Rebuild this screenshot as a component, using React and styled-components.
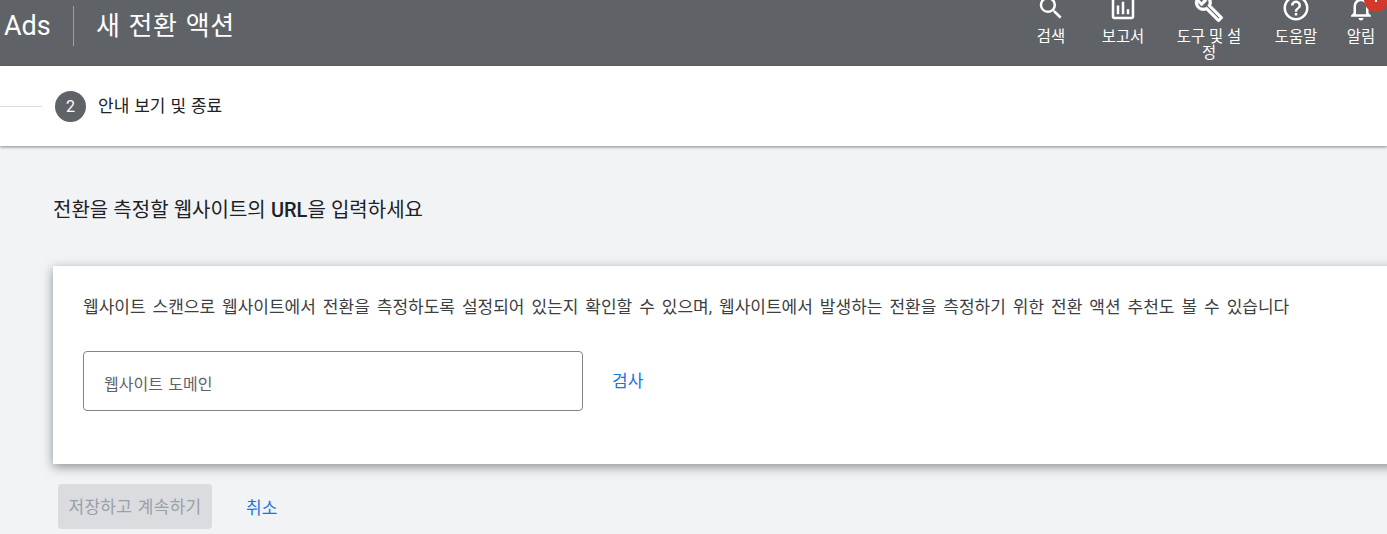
import React from "react";
import styled, { createGlobalStyle } from "styled-components";
import { MdSearch, MdOutlineAssessment, MdHelpOutline, MdNotificationsNone } from "react-icons/md";

const Global = createGlobalStyle`
  html, body { margin: 0; padding: 0; background: #f1f3f5; overflow: hidden; }
  body { font-family: Roboto, "Noto Sans CJK KR", sans-serif; }
`;

const Page = styled.div`
  width: 1387px;
  height: 534px;
  overflow: hidden;
  background: #f1f3f5;
`;

const Header = styled.header`
  height: 66px;
  background: #5f6368;
  display: flex;
  color: #fff;
  overflow: hidden;
`;

const Brand = styled.div`
  font-size: 27px;
  line-height: 52px;
  padding-left: 4px;
  width: 69px;
`;

const Divider = styled.div`
  width: 1px;
  height: 40px;
  margin-top: 6px;
  background: #9aa0a6;
`;

const Title = styled.h1`
  margin: 0 0 0 22px;
  font-size: 26px;
  font-weight: 400;
  line-height: 52px;
  flex: 1;
  letter-spacing: 0.6px;
  word-spacing: 1px;
`;

const Nav = styled.nav`
  display: flex;
`;

const NavItem = styled.div`
  width: ${(p) => p.$w}px;
  box-sizing: border-box;
  padding: 0 ${(p) => p.$pad || 0}px;
  margin-top: -7px;
  display: flex;
  flex-direction: column;
  align-items: center;
  position: relative;
  font-size: 15.4px;
  line-height: 16px;
  text-align: center;
  svg { flex: none; display: block; }
`;

const NavLabel = styled.span`
  margin-top: 6px;
`;

const WrenchSvg = styled.svg`
  width: 30px;
  height: 30px;
  fill: currentColor;
  stroke: currentColor;
  stroke-width: 0.6;
`;

const Wrench = () => (
  <WrenchSvg viewBox="0 0 24 24">
    <path d="M22.61 18.99l-9.08-9.08c.93-2.34.45-5.1-1.44-7C9.79.61 6.21.4 3.66 2.26L7.5 6.11 6.08 7.52 2.25 3.69C.39 6.23.6 9.82 2.9 12.11c1.86 1.86 4.57 2.35 6.89 1.48l9.11 9.11c.39.39 1.02.39 1.41 0l2.3-2.3c.4-.38.4-1.01 0-1.41zm-3 1.6l-9.46-9.46c-.61.45-1.29.72-2 .82-1.36.2-2.79-.21-3.83-1.25C3.37 9.76 2.93 8.5 3 7.26l3.09 3.09 4.24-4.24-3.09-3.09c1.24-.07 2.49.37 3.44 1.31 1.08 1.08 1.49 2.57 1.24 3.96-.12.71-.42 1.37-.88 1.96l9.45 9.45-.88.89z" />
  </WrenchSvg>
);

const Badge = styled.span`
  position: absolute;
  left: 29px;
  top: -5px;
  width: 24px;
  height: 24px;
  border-radius: 50%;
  background: #d13a2b;
  &::after {
    content: "";
    position: absolute;
    left: 11px;
    top: 8px;
    width: 2px;
    height: 2px;
    background: #fff;
    box-shadow: 0 4px 0 #fff;
  }
`;

const Stepper = styled.div`
  height: 80px;
  background: #fff;
  display: flex;
  align-items: center;
  box-shadow: 0 1px 3px rgba(60, 64, 67, 0.6);
  position: relative;
`;

const StepLine = styled.div`
  width: 42px;
  height: 1px;
  background: #dadce0;
`;

const StepDot = styled.div`
  width: 31px;
  height: 31px;
  margin-left: 13px;
  border-radius: 50%;
  background: #5f6368;
  color: #fff;
  font-size: 16px;
  line-height: 31px;
  text-align: center;
`;

const StepText = styled.div`
  margin: -3px 0 0 12px;
  font-size: 17px;
  word-spacing: 0.7px;
  color: #202124;
`;

const Main = styled.main`
  padding: 48px 0 0 53px;
`;

const Heading = styled.h2`
  margin: 0;
  font-size: 20px;
  line-height: 32px;
  font-weight: 400;
  color: #202124;
  word-spacing: 0.2px;
`;

const Latin = styled.span`
  font-weight: 500;
`;

const Card = styled.section`
  margin-top: 40px;
  width: 1400px;
  height: 198px;
  box-sizing: border-box;
  background: #fff;
  padding: 29px 0 0 30px;
  box-shadow: 0 3px 10px rgba(60, 64, 67, 0.55);
`;

const CardText = styled.p`
  margin: 0;
  font-size: 17px;
  line-height: 24px;
  word-spacing: 2.75px;
  color: #3c4043;
  white-space: nowrap;
`;

const SearchRow = styled.div`
  margin-top: 32px;
  display: flex;
  align-items: flex-start;
`;

const DomainInput = styled.div`
  width: 500px;
  height: 60px;
  box-sizing: border-box;
  border: 1px solid #80868b;
  border-radius: 4px;
  padding-left: 20px;
  font-size: 16px;
  line-height: 65px;
  word-spacing: 1.5px;
  color: #5f6368;
`;

const LinkButton = styled.span`
  color: #1a73e8;
  font-size: 17px;
  line-height: 24px;
`;

const ScanLink = styled(LinkButton)`
  margin: 18px 0 0 29px;
`;

const Actions = styled.div`
  margin: 20px 0 0 5px;
  display: flex;
  align-items: center;
`;

const SaveButton = styled.div`
  width: 154px;
  height: 45px;
  border-radius: 4px;
  background: #dadce0;
  color: #9aa0a6;
  font-size: 17px;
  line-height: 46px;
  letter-spacing: 0.3px;
  word-spacing: 1px;
  text-align: center;
`;

const CancelLink = styled(LinkButton)`
  margin: 2px 0 0 34px;
`;

export default function App() {
  return (
    <Page>
      <Global />
      <Header>
        <Brand>Ads</Brand>
        <Divider />
        <Title>새 전환 액션</Title>
        <Nav>
          <NavItem $w={68}><MdSearch size={30} /><NavLabel>검색</NavLabel></NavItem>
          <NavItem $w={76}><MdOutlineAssessment size={30} /><NavLabel>보고서</NavLabel></NavItem>
          <NavItem $w={96} $pad={14}><Wrench /><NavLabel>도구 및 설정</NavLabel></NavItem>
          <NavItem $w={78}><MdHelpOutline size={30} /><NavLabel>도움말</NavLabel></NavItem>
          <NavItem $w={52}>
            <MdNotificationsNone size={30} />
            <NavLabel>알림</NavLabel>
            <Badge />
          </NavItem>
        </Nav>
      </Header>
      <Stepper>
        <StepLine />
        <StepDot>2</StepDot>
        <StepText>안내 보기 및 종료</StepText>
      </Stepper>
      <Main>
        <Heading>전환을 측정할 웹사이트의 <Latin>URL</Latin>을 입력하세요</Heading>
        <Card>
          <CardText>웹사이트 스캔으로 웹사이트에서 전환을 측정하도록 설정되어 있는지 확인할 수 있으며, 웹사이트에서 발생하는 전환을 측정하기 위한 전환 액션 추천도 볼 수 있습니다</CardText>
          <SearchRow>
            <DomainInput>웹사이트 도메인</DomainInput>
            <ScanLink>검사</ScanLink>
          </SearchRow>
        </Card>
        <Actions>
          <SaveButton>저장하고 계속하기</SaveButton>
          <CancelLink>취소</CancelLink>
        </Actions>
      </Main>
    </Page>
  );
}
